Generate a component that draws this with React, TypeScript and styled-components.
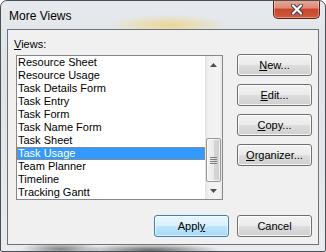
import React from 'react';
import styled, { createGlobalStyle } from 'styled-components';

const GlobalStyle = createGlobalStyle`
  html, body {
    margin: 0;
    padding: 0;
    background: #ffffff;
  }
  body {
    font-family: "Liberation Sans", Arial, sans-serif;
  }
`;

const views = [
    'Resource Sheet',
    'Resource Usage',
    'Task Details Form',
    'Task Entry',
    'Task Form',
    'Task Name Form',
    'Task Sheet',
    'Task Usage',
    'Team Planner',
    'Timeline',
    'Tracking Gantt',
];

const sideButtons = [
    { key: 'N', rest: 'ew...' },
    { key: 'E', rest: 'dit...' },
    { key: 'C', rest: 'opy...' },
    { key: 'O', rest: 'rganizer...' },
];

const Window = styled.div`
  width: 326px;
  height: 252px;
  box-sizing: border-box;
  border: 1px solid #4a4f55;
  border-radius: 7px 7px 2px 2px;
  padding: 0 6px 6px 6px;
  display: flex;
  flex-direction: column;
  background:
    radial-gradient(ellipse 60px 10px at 168px 24px, rgba(236, 210, 120, 0.75), rgba(236, 210, 120, 0) 100%),
    radial-gradient(ellipse 40px 7px at 60px 248px, rgba(30, 30, 30, 0.5), rgba(30, 30, 30, 0) 100%),
    radial-gradient(ellipse 70px 6px at 150px 249px, rgba(20, 20, 20, 0.6), rgba(20, 20, 20, 0) 100%),
    linear-gradient(to bottom, #e6e9ed 0%, #dfe3e7 30%, #e9ebee 100%);
  font-family: "Liberation Sans", Arial, sans-serif;
  font-size: 11px;
  color: #000;
  overflow: hidden;
`;

const TitleBar = styled.div`
  height: 28px;
  display: flex;
  align-items: flex-start;
  justify-content: space-between;
`;

const Title = styled.div`
  padding: 8px 0 0 2px;
  font-size: 12px;
  line-height: 14px;
  color: #000;
`;

const CloseButton = styled.div`
  width: 47px;
  height: 19px;
  margin-top: -1px;
  margin-right: -1px;
  box-sizing: border-box;
  border: 1px solid #5a2319;
  border-top: none;
  border-radius: 0 0 5px 5px;
  background: linear-gradient(to bottom, #e9a99a 0%, #dc8a75 45%, #c7452b 50%, #d05a3c 100%);
  box-shadow: inset 0 0 0 1px rgba(255, 255, 255, 0.35);
  display: flex;
  align-items: center;
  justify-content: center;
`;

const Client = styled.div`
  flex: 1;
  background: #f0f0f0;
  border: 1px solid #6d7278;
  padding: 7px 6px 0 6px;
  display: flex;
  flex-direction: column;
`;

const Main = styled.div`
  display: flex;
  gap: 14px;
`;

const LeftColumn = styled.div`
  flex: 1;
  display: flex;
  flex-direction: column;
`;

const Label = styled.div`
  height: 15px;
  line-height: 15px;
  margin-bottom: 3px;
`;

const Key = styled.span`
  text-decoration: underline;
  text-underline-offset: 1px;
`;

const ListBox = styled.div`
  margin-left: 2px;
  height: 145px;
  box-sizing: border-box;
  border: 1px solid #828790;
  background: #fff;
  display: flex;
`;

const Items = styled.div`
  flex: 1;
  display: flex;
  flex-direction: column;
`;

const Item = styled.div<{ $selected?: boolean }>`
  height: 13px;
  line-height: 13px;
  padding-left: 1px;
  white-space: nowrap;
  box-sizing: border-box;
  background: ${p => (p.$selected ? '#3399ff' : 'transparent')};
  color: ${p => (p.$selected ? '#fff' : '#000')};
  outline: ${p => (p.$selected ? '1px dotted #c8872f' : 'none')};
  outline-offset: -1px;
`;

const ScrollBar = styled.div`
  width: 17px;
  display: flex;
  flex-direction: column;
  background: linear-gradient(to right, #e3e3e3 0%, #f0f0f0 20%, #f4f4f4 80%, #e8e8e8 100%);
`;

const ArrowButton = styled.div`
  height: 17px;
  display: flex;
  align-items: center;
  justify-content: center;
`;

const Track = styled.div`
  flex: 1;
  display: flex;
  flex-direction: column;
  justify-content: flex-end;
`;

const Thumb = styled.div`
  height: 44px;
  margin: 0 1px;
  box-sizing: border-box;
  border: 1px solid #979797;
  border-radius: 2px;
  background: linear-gradient(to right, #f4f4f4 0%, #e9e9e9 50%, #d6d6d6 51%, #cfcfcf 100%);
  box-shadow: inset 0 0 0 1px rgba(255, 255, 255, 0.7);
  display: flex;
  align-items: center;
  justify-content: center;
`;

const SideButtons = styled.div`
  width: 75px;
  padding-top: 17px;
  display: flex;
  flex-direction: column;
  gap: 8px;
`;

const Button = styled.div<{ $default?: boolean }>`
  height: 22px;
  box-sizing: border-box;
  border: 1px solid ${p => (p.$default ? '#3c7fb1' : '#707070')};
  border-radius: 3px;
  background: ${p =>
        p.$default
            ? 'linear-gradient(to bottom, #eaf6fd 0%, #d9f0fc 50%, #bee6fd 51%, #a7d9f5 100%)'
            : 'linear-gradient(to bottom, #f2f2f2 0%, #ebebeb 50%, #dddddd 51%, #cfcfcf 100%)'};
  box-shadow: inset 0 0 0 1px ${p => (p.$default ? 'rgba(255,255,255,0.6)' : 'rgba(255,255,255,0.8)')};
  display: flex;
  align-items: center;
  justify-content: center;
  line-height: 14px;
  color: #000;
`;

const Footer = styled.div`
  margin-top: 15px;
  display: flex;
  justify-content: flex-end;
  gap: 8px;
  ${Button} {
    width: 75px;
  }
`;

const Grip = () => (
    <svg width="7" height="7" viewBox="0 0 7 7">
        <path d="M0 0.5H7M0 2.5H7M0 4.5H7M0 6.5H7" stroke="#7d7d7d" strokeWidth="1" />
    </svg>
);

const Arrow: React.FC<{ down?: boolean }> = ({ down }) => (
    <svg width="7" height="4" viewBox="0 0 7 4">
        <path d={down ? 'M0 0H7L3.5 4Z' : 'M0 4H7L3.5 0Z'} fill="#4d4d4d" />
    </svg>
);

export default function App() {
    const selected = 'Task Usage';

    return (
        <>
            <GlobalStyle />
            <Window>
                <TitleBar>
                    <Title>More Views</Title>
                    <CloseButton>
                        <svg width="12" height="11" viewBox="0 0 12 11">
                            <path d="M2 1.5L10 9.5M10 1.5L2 9.5" stroke="#3a3f47" strokeWidth="4" strokeLinecap="round" />
                            <path d="M2 1.5L10 9.5M10 1.5L2 9.5" stroke="#ffffff" strokeWidth="2.2" strokeLinecap="round" />
                        </svg>
                    </CloseButton>
                </TitleBar>
                <Client>
                    <Main>
                        <LeftColumn>
                            <Label><Key>V</Key>iews:</Label>
                            <ListBox>
                                <Items>
                                    {views.map(v => (
                                        <Item key={v} $selected={v === selected}>{v}</Item>
                                    ))}
                                </Items>
                                <ScrollBar>
                                    <ArrowButton><Arrow /></ArrowButton>
                                    <Track>
                                        <Thumb><Grip /></Thumb>
                                    </Track>
                                    <ArrowButton><Arrow down /></ArrowButton>
                                </ScrollBar>
                            </ListBox>
                        </LeftColumn>
                        <SideButtons>
                            {sideButtons.map(b => (
                                <Button key={b.key}><span><Key>{b.key}</Key>{b.rest}</span></Button>
                            ))}
                        </SideButtons>
                    </Main>
                    <Footer>
                        <Button $default><span>Appl<Key>y</Key></span></Button>
                        <Button>Cancel</Button>
                    </Footer>
                </Client>
            </Window>
        </>
    );
}
